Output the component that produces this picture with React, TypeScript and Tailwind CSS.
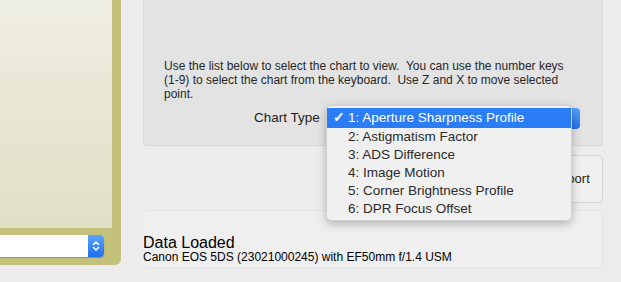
const charts = [
  "1: Aperture Sharpness Profile",
  "2: Astigmatism Factor",
  "3: ADS Difference",
  "4: Image Motion",
  "5: Corner Brightness Profile",
  "6: DPR Focus Offset",
];

function Stepper() {
  return (
    <svg width="8" height="12" viewBox="0 0 8 12" fill="none" stroke="white" strokeWidth="1.6" strokeLinecap="round" strokeLinejoin="round">
      <path d="M1.5 4.5 L4 2 L6.5 4.5" />
      <path d="M1.5 7.5 L4 10 L6.5 7.5" />
    </svg>
  );
}

export default function App() {
  return (
    <div className="relative flex h-[282px] w-[621px] overflow-hidden bg-[#ececec] font-['Liberation_Sans',Arial,sans-serif] text-[#1e1e1e]">
      {/* left lens panel */}
      <div className="flex h-[265px] w-[121px] flex-col rounded-br-[6px] bg-[#c4c17c] pr-[9px]">
        <div className="h-[228px] bg-gradient-to-b from-[#efeee3] to-[#e1dfc4]" />
        <div className="mt-[7px] flex h-[22px] w-[104px] overflow-hidden rounded-r-[4px] bg-white shadow-[0_1px_1px_rgba(0,0,0,0.25)]">
          <div className="flex-1" />
          <div className="flex w-[16px] items-center justify-center bg-gradient-to-b from-[#5aa2fb] to-[#1e6ff0]">
            <Stepper />
          </div>
        </div>
      </div>

      {/* right column */}
      <div className="ml-[22px] flex w-[460px] flex-col">
        <div className="h-[146px] rounded-b-[4px] border-x border-b border-[#d8d8d8] bg-[#e3e3e3] px-[20px] pt-[59px]">
          <p className="w-[400px] text-[12px] leading-[14px] text-[#262626]">
            Use the list below to select the chart to view.&nbsp; You can use the number keys (1-9) to select the chart from the keyboard.&nbsp; Use Z and X to move selected point.
          </p>
          <div className="mt-[7px] flex items-center">
            <span className="ml-[90px] w-[73px] text-[13.5px]">Chart Type</span>
            <div className="flex h-[21px] w-[253px] justify-end rounded-[4px] bg-gradient-to-b from-[#5aa2fb] to-[#1e6ff0] pr-[2px]" />
          </div>
        </div>

        <div className="mt-[9px] flex justify-end">
          <div className="flex h-[48px] w-[64px] items-center justify-center rounded-[5px] border border-[#d6d6d6] bg-[#f0f0f0] text-[13px]">
            Export
          </div>
        </div>

        <div className="mt-[7px] h-[58px] rounded-[4px] border-y border-r border-[#e4e4e4] bg-[#efefef] pt-[23px]">
          <div className="text-[16px] leading-[17px] text-black">Data Loaded</div>
          <div className="text-[12px] leading-[13px] text-black">Canon EOS 5DS (23021000245) with EF50mm f/1.4 USM</div>
        </div>
      </div>

      {/* open popup menu */}
      <div className="absolute left-[326px] top-[105px] w-[246px] rounded-[5px] border border-[#d0d0d0] bg-[#f0f0f0] py-[2px] text-[13.5px] shadow-[0_3px_10px_rgba(0,0,0,0.25)]">
        {charts.map((c, i) => (
          <div
            key={c}
            className={
              i === 0
                ? "flex h-[20px] items-center bg-[#2b7df5] text-white"
                : "flex h-[18px] items-center text-[#2a2a2a]"
            }
          >
            <span className="w-[21px] pl-[6px] font-bold">{i === 0 ? "✓" : ""}</span>
            {c}
          </div>
        ))}
      </div>
    </div>
  );
}
